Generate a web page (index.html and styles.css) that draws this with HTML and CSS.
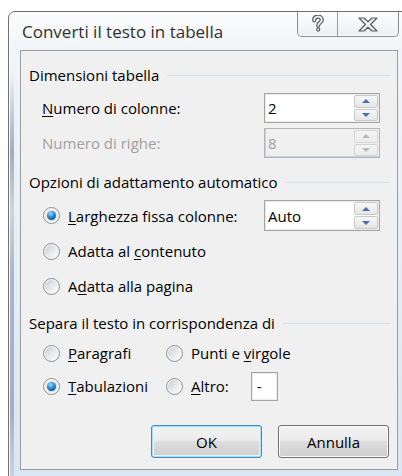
FILE: index.html
```html
<!DOCTYPE html>
<html lang="it">
<head>
<meta charset="utf-8">
<title>Converti il testo in tabella</title>
<link rel="stylesheet" href="styles.css">
</head>
<body>
<div class="window">
  <div class="titlebar">
    <span class="title">Converti il testo in tabella</span>
    <div class="caption-buttons">
      <span class="cap-btn help">
        <svg width="14" height="18" viewBox="0 0 14 18">
          <g fill="none" stroke-linecap="round" stroke-linejoin="round">
            <path d="M3.2 5.4 C3.2 2.6 5 1.6 7 1.6 C9.2 1.6 10.8 3 10.8 5 C10.8 7.4 7.2 7.6 7.2 10.6" stroke="#5a5a5a" stroke-width="4.2"/>
            <path d="M7.2 14.4 L7.2 14.6" stroke="#5a5a5a" stroke-width="4.2"/>
            <path d="M3.2 5.4 C3.2 2.6 5 1.6 7 1.6 C9.2 1.6 10.8 3 10.8 5 C10.8 7.4 7.2 7.6 7.2 10.6" stroke="#f2f2f2" stroke-width="1.8"/>
            <path d="M7.2 14.4 L7.2 14.6" stroke="#f2f2f2" stroke-width="1.8"/>
          </g>
        </svg>
      </span>
      <span class="cap-btn close">
        <svg width="20" height="15" viewBox="0 0 20 15">
          <polygon points="1,1 6,1 10,4.8 14,1 19,1 12.6,7.5 19,14 14,14 10,10.2 6,14 1,14 7.4,7.5" fill="#efefef" stroke="#5a5a5a" stroke-width="1.2" stroke-linejoin="round"/>
        </svg>
      </span>
    </div>
  </div>

  <div class="client">
    <div class="group-head">Dimensioni tabella</div>

    <div class="row gap-8">
      <span class="label"><u>N</u>umero di colonne:</span>
      <div class="spin">
        <span class="spin-value">2</span>
        <div class="spin-btns"><span class="spin-btn"><i class="arrow-up"></i></span><span class="spin-btn"><i class="arrow-down"></i></span></div>
      </div>
    </div>

    <div class="row gap-5 disabled">
      <span class="label">Numero di righe:</span>
      <div class="spin">
        <span class="spin-value">8</span>
        <div class="spin-btns"><span class="spin-btn"><i class="arrow-up"></i></span><span class="spin-btn"><i class="arrow-down"></i></span></div>
      </div>
    </div>

    <div class="group-head gap-14">Opzioni di adattamento automatico</div>

    <div class="row gap-8 tall">
      <span class="radio checked"><i class="dot"></i><span><u>L</u>arghezza fissa colonne:</span></span>
      <div class="spin">
        <span class="spin-value">Auto</span>
        <div class="spin-btns"><span class="spin-btn"><i class="arrow-up"></i></span><span class="spin-btn"><i class="arrow-down"></i></span></div>
      </div>
    </div>

    <div class="row gap-5">
      <span class="radio"><i class="dot"></i><span>Adatta al <u>c</u>ontenuto</span></span>
    </div>

    <div class="row gap-5">
      <span class="radio"><i class="dot"></i><span>A<u>d</u>atta alla pagina</span></span>
    </div>

    <div class="group-head gap-12">Separa il testo in corrispondenza di</div>

    <div class="row pair gap-5">
      <span class="radio"><i class="dot"></i><span><u>P</u>aragrafi</span></span>
      <span class="radio"><i class="dot"></i><span>Punti e <u>v</u>irgole</span></span>
    </div>

    <div class="row pair gap-3">
      <span class="radio checked"><i class="dot"></i><span><u>T</u>abulazioni</span></span>
      <span class="radio"><i class="dot"></i><span><u>A</u>ltro:</span><span class="char-box">-</span></span>
    </div>

    <div class="buttons">
      <button class="btn default">OK</button>
      <button class="btn">Annulla</button>
    </div>
  </div>
</div>
</body>
</html>
```

FILE: styles.css
```css
* {
  box-sizing: border-box;
}

html,
body {
  margin: 0;
  padding: 0;
  overflow: hidden;
}

body {
  width: 402px;
  height: 476px;
  background: #ffffff;
  font-family: "Open Sans", "Noto Sans", sans-serif;
  font-size: 15px;
  color: #000;
}

u {
  text-decoration-thickness: 1px;
  text-underline-offset: 2px;
}

/* Aero-style window frame, with the glass streak down the left edge */
.window {
  margin: 11px 0 0 8px;
  width: 402px;
  height: 480px;
  padding: 0 11px;
  border: 1px solid #6e6e6e;
  border-radius: 7px 7px 0 0;
  background:
    linear-gradient(to bottom, rgba(120, 138, 160, 0) 60px, rgba(120, 138, 160, 0.35) 100px, rgba(110, 128, 150, 0.6) 140px, rgba(120, 138, 160, 0.25) 200px, rgba(110, 130, 155, 0.5) 260px, rgba(110, 130, 155, 0.55) 400px, rgba(120, 138, 160, 0.2) 465px) 1px 0 / 4px 100% no-repeat,
    linear-gradient(to bottom, #fbfcfd 0, #f1f4f8 40px, #e4ecf5 60%, #d9e5f2 100%);
  box-shadow: inset 1px 1px 0 #ffffff;
}

.titlebar {
  display: flex;
  align-items: flex-start;
  height: 38px;
}

.title {
  margin: 10px 0 0 2px;
  font-size: 17px;
  line-height: 20px;
  color: #303030;
}

.caption-buttons {
  display: flex;
  margin-left: auto;
  margin-right: -1px;
  height: 25px;
  border: 1px solid #8d8d8d;
  border-top: none;
  border-radius: 0 0 5px 5px;
  background: linear-gradient(to bottom, #fdfdfd, #eceff3);
  box-shadow: inset 0 -1px 0 #ffffff;
}

.cap-btn {
  display: flex;
  align-items: center;
  justify-content: center;
  height: 100%;
}

.cap-btn.help {
  width: 40px;
  border-right: 1px solid #9a9a9a;
}

.cap-btn.close {
  width: 60px;
}

/* dialog client area */
.client {
  width: 378px;
  height: 420px;
  border: 1px solid #9c9c9c;
  background: #f0f0f0;
  padding: 14px 7px 0 8px;
}

.group-head {
  display: flex;
  align-items: center;
  gap: 8px;
  height: 20px;
  line-height: 20px;
  white-space: nowrap;
}

.group-head::after {
  content: "";
  flex: 1;
  height: 1px;
  background: #d5dfe5;
}

.gap-3 { margin-top: 3px; }
.gap-5 { margin-top: 5px; }
.gap-8 { margin-top: 8px; }
.gap-12 { margin-top: 12px; }
.gap-14 { margin-top: 14px; }

.row {
  display: grid;
  grid-template-columns: 222px 116px;
  align-items: center;
  height: 30px;
  padding-left: 13px;
  white-space: nowrap;
}

.row.tall {
  height: 31px;
}

.row.pair {
  grid-template-columns: 123px 150px;
}

.row.disabled .label {
  color: #a0a0a0;
}

/* radio buttons */
.radio {
  display: flex;
  align-items: center;
}

.dot {
  position: relative;
  flex: none;
  width: 17px;
  height: 17px;
  margin: 0 8px 0 1px;
  border: 1px solid #8e8f8f;
  border-radius: 50%;
  background: #f5f5f5;
}

.dot::after {
  content: "";
  position: absolute;
  left: 1px;
  top: 1px;
  width: 13px;
  height: 13px;
  border-radius: 50%;
  background: linear-gradient(135deg, #c9ccd1 0%, #e6e8eb 50%, #fdfdfd 100%);
}

.radio.checked .dot::after {
  left: 3px;
  top: 3px;
  width: 9px;
  height: 9px;
  background: radial-gradient(circle at 40% 30%, #9fe0ff 0%, #3a9be0 35%, #0d5596 75%, #0a3e72 100%);
  box-shadow: 0 0 0 1px #d7dbe0;
}

.char-box {
  display: flex;
  align-items: center;
  width: 27px;
  height: 29px;
  margin-left: 22px;
  padding-left: 5px;
  border: 1px solid #a4a4a4;
  background: #fff;
  box-shadow: inset 0 0 0 1px #ececec;
}

/* spin boxes */
.spin {
  display: flex;
  align-items: stretch;
  width: 116px;
  height: 30px;
  border: 1px solid #a4a4a4;
  background: #fff;
  box-shadow: inset 0 0 0 1px #ebebeb;
}

.tall .spin {
  height: 31px;
}

.spin-value {
  flex: 1;
  display: flex;
  align-items: center;
  padding-left: 3px;
}

.spin-btns {
  display: flex;
  flex-direction: column;
  gap: 1px;
  width: 24px;
  margin: 1px 1px 1px 0;
}

.spin-btn {
  flex: 1;
  display: flex;
  align-items: center;
  justify-content: center;
  border: 1px solid #c9c9c9;
  border-radius: 2px;
  background: linear-gradient(to bottom, #f7f7f7, #e5e5e5);
}

.arrow-up,
.arrow-down {
  width: 0;
  height: 0;
  border-left: 4px solid transparent;
  border-right: 4px solid transparent;
}

.arrow-up {
  border-bottom: 4px solid #4e6ea4;
}

.arrow-down {
  border-top: 4px solid #4e6ea4;
}

.disabled .spin {
  background: #f0f0f0;
  border-color: #b5b5b5;
  box-shadow: inset 1px -1px 0 #bcd5ee;
  color: #a0a0a0;
}

.disabled .spin-btn {
  background: linear-gradient(to bottom, #f4f4f4, #ececec);
  border-color: #d6d6d6;
}

.disabled .arrow-up {
  border-bottom-color: #b9b9b9;
}

.disabled .arrow-down {
  border-top-color: #b9b9b9;
}

/* command buttons */
.buttons {
  display: flex;
  justify-content: flex-end;
  gap: 16px;
  margin-top: 24px;
  padding-right: 1px;
}

.btn {
  width: 111px;
  height: 33px;
  padding: 0;
  border: 1px solid #707070;
  border-radius: 3px;
  background: linear-gradient(to bottom, #f2f2f2 0%, #ebebeb 50%, #dddddd 50%, #cfcfcf 100%);
  box-shadow: inset 0 0 0 1px #fbfbfb;
  font-family: inherit;
  font-size: 15px;
  color: #000;
}

.btn.default {
  border-color: #3c8ad0;
  box-shadow: inset 0 0 0 1px #a9def7, inset 0 0 0 2px #e4f5fd;
}
```
